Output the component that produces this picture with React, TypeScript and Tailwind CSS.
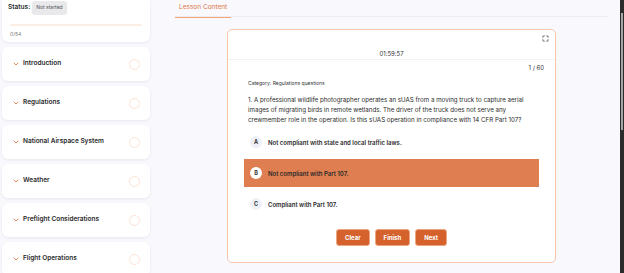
import { ChevronDown, Maximize } from "lucide-react";

const modules = [
  "Introduction",
  "Regulations",
  "National Airspace System",
  "Weather",
  "Preflight Considerations",
  "Flight Operations",
];

const options = [
  { key: "A", text: "Not compliant with state and local traffic laws." },
  { key: "B", text: "Not compliant with Part 107.", selected: true },
  { key: "C", text: "Compliant with Part 107." },
];

const ModuleCard = ({ title }: { title: string }) => (
  <div className="flex h-[34px] shrink-0 items-center rounded-[6px] bg-white pl-[10px] pr-[10px] shadow-[0_1px_3px_rgba(30,30,60,0.08)]">
    <ChevronDown size={8} strokeWidth={2.5} className="text-[#e2703c]" />
    <span className="ml-[3px] text-[6.5px] font-semibold text-[#2a2a2a]">{title}</span>
    <span className="ml-auto h-[11px] w-[11px] rounded-full border-[1.5px] border-[#fde4d5]" />
  </div>
);

export default function App() {
  return (
    <div className="flex h-[273px] w-[624px] overflow-hidden bg-[#f8f8fd] font-['Inter',sans-serif] text-[#222]">
      <aside className="ml-[2px] flex w-[148px] shrink-0 flex-col gap-[5px]">
        <div className="h-[42px] shrink-0 rounded-b-[6px] bg-white px-[6px] pt-[1px] shadow-[0_1px_3px_rgba(30,30,60,0.08)]">
          <div className="flex items-center gap-[2px]">
            <span className="text-[6.5px] font-semibold text-[#2a2a2a]">Status:</span>
            <span className="rounded-[3px] bg-[#e9e9ec] px-[4px] py-[3px] text-[5px] text-[#555]">Not started</span>
          </div>
          <div className="mx-[2px] mt-[9px] h-[2px] rounded-full bg-[#fdeee4]" />
          <div className="mt-[5px] pl-[2px] text-[5px] text-[#777]">0/54</div>
        </div>
        {modules.map((m) => (
          <ModuleCard key={m} title={m} />
        ))}
      </aside>

      <main className="ml-[25px] flex w-[433px] shrink-0 flex-col">
        <div className="flex h-[17px] border-b-[1.5px] border-[#ececf2]">
          <span className="-mb-[1.5px] flex items-center border-b-[1.5px] border-[#f5a677] px-[4px] text-[6.5px] text-[#e0743f]">
            Lesson Content
          </span>
        </div>

        <div className="mx-auto mt-[12px] flex h-[234px] w-[329px] flex-col rounded-[5px] border border-[#f8c6ac] bg-white">
          <div className="relative flex h-[30px] items-end justify-center border-b-[1.5px] border-[#f2f2f4] pb-[1px]">
            <span className="text-[6px] text-[#333]">01:59:57</span>
            <Maximize size={7} strokeWidth={2.5} className="absolute right-[6px] top-[5px] text-[#333]" />
          </div>

          <div className="flex flex-1 flex-col px-[16px]">
            <div className="-mr-[5px] mt-[4px] text-right text-[6px] leading-[8px] text-[#333]">1 / 60</div>
            <div className="mt-[7px] pl-[4px] text-[5px] leading-[8px] text-[#333]">Category: Regulations questions</div>
            <p className="mt-[8px] pl-[4px] text-[6.2px] leading-[10px] text-[#2a2a2a]">
              1. A professional wildlife photographer operates an sUAS from a moving truck to capture aerial
              images of migrating birds in remote wetlands. The driver of the truck does not serve any
              crewmember role in the operation. Is this sUAS operation in compliance with 14 CFR Part 107?
            </p>

            <div className="mt-[3px] flex flex-col gap-[3px]">
              {options.map((o) => (
                <div
                  key={o.key}
                  className={`flex h-[28px] items-center gap-[6px] pl-[6px] ${o.selected ? "bg-[#df7f51]" : ""}`}
                >
                  <span
                    className={`flex h-[12px] w-[12px] items-center justify-center rounded-full text-[5.5px] font-bold text-[#333] ${o.selected ? "bg-white" : "bg-[#eef0f7]"}`}
                  >
                    {o.key}
                  </span>
                  <span className="text-[6px] font-semibold text-[#2a2a2a]">{o.text}</span>
                </div>
              ))}
            </div>

            <div className="mt-[11px] flex justify-center gap-[5px]">
              {["Clear", "Finish", "Next"].map((b) => (
                <button
                  key={b}
                  className="h-[17px] rounded-[3px] border border-[#eba581] bg-[#d5622c] px-[8px] text-[6px] font-bold text-white"
                >
                  {b}
                </button>
              ))}
            </div>
          </div>
        </div>
      </main>

      <div className="ml-[12px] flex w-[4px] shrink-0 flex-col bg-[#2b2b2b] pt-[13px]">
        <div className="mx-auto h-[117px] w-[2px] bg-[#a6a6a6]" />
      </div>
    </div>
  );
}
